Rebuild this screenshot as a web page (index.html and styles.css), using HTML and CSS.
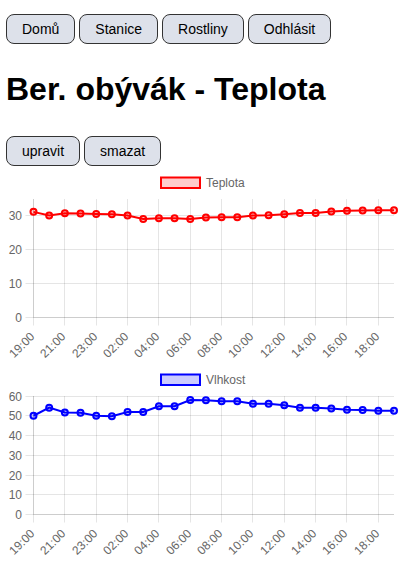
FILE: index.html
```html
<!DOCTYPE html>
<html lang="cs">
<head>
    <meta charset="UTF-8">
    <meta name="viewport" content="width=device-width, initial-scale=1.0">
    <title>Ber. obývák - Teplota</title>
    <link rel="stylesheet" href="styles.css">
</head>
<body>
    <nav class="nav">
        <a class="btn" href="#">Domů</a>
        <a class="btn" href="#">Stanice</a>
        <a class="btn" href="#">Rostliny</a>
        <a class="btn" href="#">Odhlásit</a>
    </nav>

    <h1>Ber. obývák - Teplota</h1>

    <div class="actions">
        <button class="btn" type="button">upravit</button>
        <button class="btn" type="button">smazat</button>
    </div>

    <div class="charts">
        <svg id="tempChart" class="chart" width="407" height="197"></svg>
        <svg id="humChart" class="chart" width="407" height="197"></svg>
    </div>

    <script>
        // Hour labels for the last 24 readings (00:00 is missing)
        const labels = ["19:00", "20:00", "21:00", "22:00", "23:00", "01:00"];
        for (let h = 2; h <= 19; h++) {
            labels.push(String(h).padStart(2, "0") + ":00");
        }

        const datasets = [
            {
                id: "tempChart",
                label: "Teplota",
                color: "#ff0000",
                fill: "rgba(255, 0, 0, 0.2)",
                max: 35,
                data: [31.2, 30.1, 30.8, 30.7, 30.6, 30.5, 30.1, 29.1, 29.3, 29.3, 29.1, 29.5,
                       29.6, 29.6, 30.1, 30.2, 30.5, 30.9, 30.9, 31.3, 31.5, 31.6, 31.7, 31.7]
            },
            {
                id: "humChart",
                label: "Vlhkost",
                color: "#0000ff",
                fill: "rgba(0, 0, 255, 0.2)",
                max: 60,
                data: [50.0, 54.1, 51.7, 51.5, 50.0, 49.8, 51.9, 51.9, 54.8, 54.8, 58.0, 57.8,
                       57.3, 57.3, 56.1, 56.1, 55.3, 54.1, 54.1, 53.7, 53.0, 52.9, 52.5, 52.5]
            }
        ];

        // Chart area inside each svg
        const area = { left: 33.5, right: 394, top: 33, bottom: 151.5 };
        const tick = 8;
        const grid = "rgba(0, 0, 0, 0.1)";
        const ns = "http://www.w3.org/2000/svg";

        function el(name, attrs, text) {
            const node = document.createElementNS(ns, name);
            for (const key in attrs) {
                node.setAttribute(key, attrs[key]);
            }
            if (text) node.textContent = text;
            return node;
        }

        function crisp(v) {
            return Math.round(v - 0.5) + 0.5;
        }

        function drawChart(set) {
            const svg = document.getElementById(set.id);
            const stepX = (area.right - area.left) / (set.data.length - 1);
            const xAt = i => area.left + i * stepX;
            const yAt = v => area.bottom - v / set.max * (area.bottom - area.top);

            // Legend
            svg.appendChild(el("rect", {
                x: 161, y: 11.5, width: 39, height: 10.5,
                fill: set.fill, stroke: set.color, "stroke-width": 2
            }));
            svg.appendChild(el("text", { x: 206, y: 21, class: "legend" }, set.label));

            // Horizontal grid + y labels
            for (let v = 0; v <= set.max; v += 10) {
                const y = crisp(yAt(v));
                svg.appendChild(el("line", {
                    x1: area.left - tick, x2: area.right, y1: y, y2: y, stroke: grid
                }));
                svg.appendChild(el("text", { x: 22, y: y + 4, class: "tick-y" }, String(v)));
            }

            // Vertical grid + x labels on every other reading
            for (let i = 0; i < set.data.length; i += 2) {
                const x = crisp(xAt(i));
                svg.appendChild(el("line", {
                    x1: x, x2: x, y1: area.top, y2: area.bottom + tick, stroke: grid
                }));
                svg.appendChild(el("text", {
                    transform: `translate(${x - 1}, ${area.bottom + 17}) rotate(-45)`,
                    y: 4, class: "tick-x"
                }, labels[i]));
            }

            // Axis borders
            svg.appendChild(el("line", {
                x1: area.left, x2: area.left, y1: area.top, y2: area.bottom, stroke: grid
            }));
            svg.appendChild(el("line", {
                x1: area.left, x2: area.right, y1: area.bottom, y2: area.bottom, stroke: grid
            }));

            // Line + points
            const points = set.data.map((v, i) => `${xAt(i)},${yAt(v)}`).join(" ");
            svg.appendChild(el("polyline", {
                points: points, fill: "none", stroke: set.color, "stroke-width": 2
            }));
            set.data.forEach((v, i) => {
                svg.appendChild(el("circle", {
                    cx: xAt(i), cy: yAt(v), r: 3,
                    fill: set.fill, stroke: set.color, "stroke-width": 2
                }));
            });
        }

        datasets.forEach(drawChart);
    </script>
</body>
</html>
```

FILE: styles.css
```css
body {
    font-family: "Liberation Sans", Arial, sans-serif;
    margin: 0;
    padding: 14px 6px 0;
    background-color: #fff;
    color: #000;
}

.nav,
.actions {
    display: flex;
    gap: 4px;
}

.btn {
    display: inline-block;
    padding: 6px 15px;
    font-family: "Liberation Sans", Arial, sans-serif;
    font-size: 14px;
    line-height: 16px;
    color: #000;
    text-decoration: none;
    background-color: #dde1ea;
    border: 1px solid #333;
    border-radius: 8px;
    cursor: pointer;
}

.btn:hover {
    background-color: #cfd4df;
}

h1 {
    font-size: 32px;
    margin: 27px 0 28px;
}

.charts {
    margin-left: -6px;
}

.chart {
    display: block;
}

.chart text {
    font-family: "Liberation Sans", Arial, sans-serif;
    font-size: 12px;
    fill: #666;
}

.tick-y,
.tick-x {
    text-anchor: end;
}
```
